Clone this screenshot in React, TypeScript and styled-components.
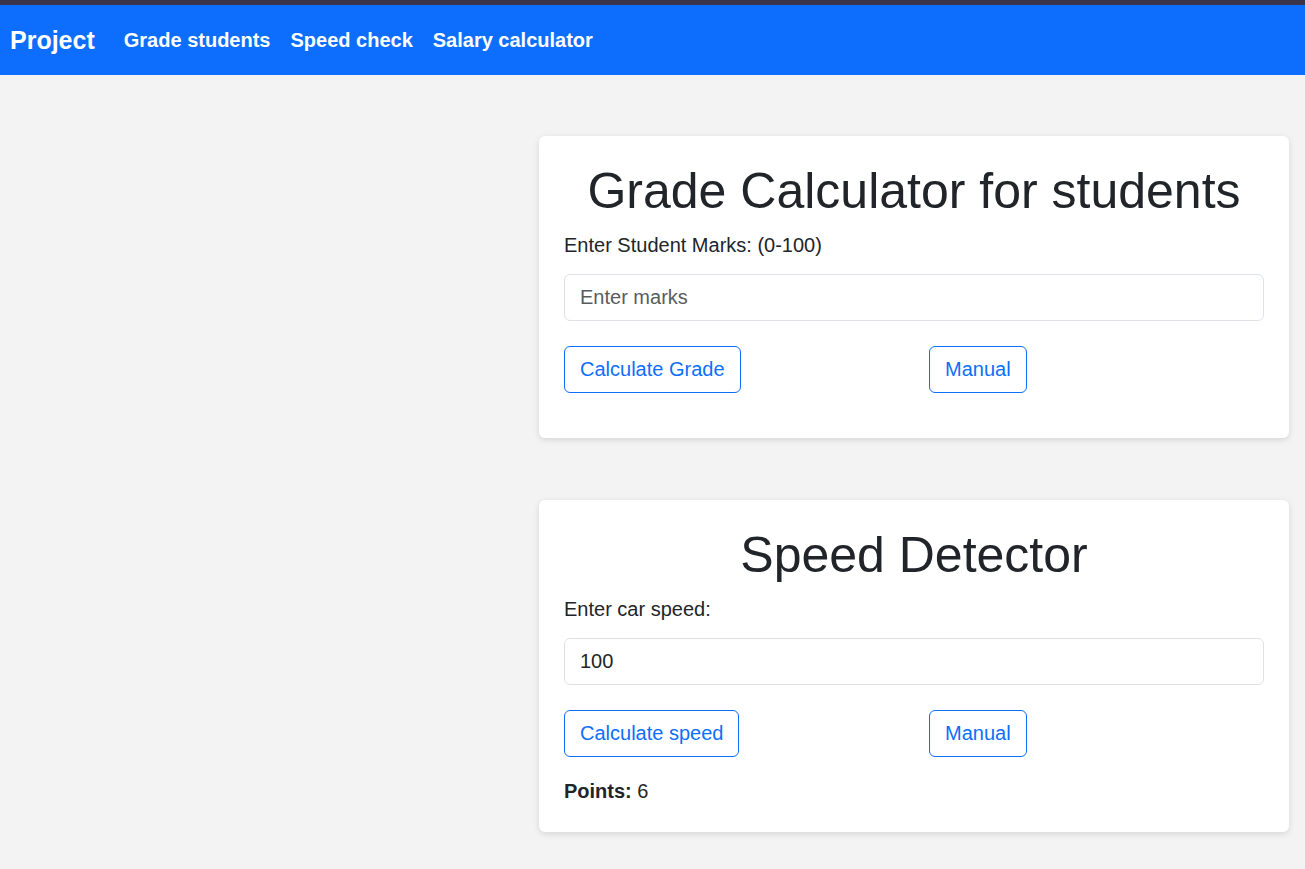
import React from "react";
import styled, { createGlobalStyle } from "styled-components";

const GlobalStyle = createGlobalStyle`
  html, body {
    margin: 0;
    padding: 0;
    background: #f3f3f3;
    font-family: "Liberation Sans", Arial, sans-serif;
    color: #212529;
  }
  * { box-sizing: border-box; }
`;

const TopStrip = styled.div`
  height: 5px;
  background: #3a3548;
`;

const NavBar = styled.nav`
  height: 70px;
  background: #0d6efd;
  display: flex;
  align-items: center;
  padding: 0 10px;
  gap: 20px;
`;

const Brand = styled.a`
  color: #fff;
  font-weight: 700;
  font-size: 25px;
  text-decoration: none;
  margin-right: 9px;
`;

const NavLink = styled.a`
  color: #fff;
  font-weight: 700;
  font-size: 20px;
  text-decoration: none;
`;

const Main = styled.main`
  display: flex;
  flex-direction: column;
  align-items: flex-end;
  padding: 61px 16px 37px 0;
  gap: 62px;
`;

const Card = styled.section`
  width: 750px;
  background: #fff;
  border-radius: 6px;
  box-shadow: 0 2px 6px rgba(0, 0, 0, 0.12);
  padding: 25px 25px 26px;
`;

const Title = styled.h1`
  margin: 0 0 9px;
  font-size: 50px;
  font-weight: 400;
  line-height: 1.2;
  text-align: center;
`;

const Label = styled.label`
  display: block;
  font-size: 20px;
  line-height: 1.5;
  margin-bottom: 14px;
`;

const Input = styled.input`
  display: block;
  width: 100%;
  height: 47px;
  padding: 8px 15px;
  font-family: inherit;
  font-size: 20px;
  color: #212529;
  border: 1px solid #dee2e6;
  border-radius: 6px;
  background: #fff;
  outline: none;
  &::placeholder { color: #595c5f; opacity: 1; }
`;

const ButtonRow = styled.div`
  display: grid;
  grid-template-columns: 1fr 1fr;
  column-gap: 30px;
  margin-top: 25px;
`;

const Cell = styled.div`
  display: flex;
`;

const OutlineButton = styled.button`
  height: 47px;
  padding: 0 15px;
  font-family: inherit;
  font-size: 20px;
  color: #0d6efd;
  background: #fff;
  border: 1px solid #0d6efd;
  border-radius: 6px;
  cursor: pointer;
`;

const Result = styled.p<{ $top: number }>`
  margin: ${(p) => p.$top}px 0 0;
  font-size: 20px;
  line-height: 1.5;
  min-height: ${(p) => (p.$top ? 0 : 19)}px;
`;

export default function App() {
  return (
    <>
      <GlobalStyle />
      <TopStrip />
      <NavBar>
        <Brand href="#">Project</Brand>
        <NavLink href="#">Grade students</NavLink>
        <NavLink href="#">Speed check</NavLink>
        <NavLink href="#">Salary calculator</NavLink>
      </NavBar>
      <Main>
        <Card>
          <Title>Grade Calculator for students</Title>
          <Label htmlFor="marks">Enter Student Marks: (0-100)</Label>
          <Input id="marks" placeholder="Enter marks" />
          <ButtonRow>
            <Cell>
              <OutlineButton>Calculate Grade</OutlineButton>
            </Cell>
            <Cell>
              <OutlineButton>Manual</OutlineButton>
            </Cell>
          </ButtonRow>
          <Result $top={0} />
        </Card>
        <Card>
          <Title>Speed Detector</Title>
          <Label htmlFor="speed">Enter car speed:</Label>
          <Input id="speed" defaultValue="100" />
          <ButtonRow>
            <Cell>
              <OutlineButton>Calculate speed</OutlineButton>
            </Cell>
            <Cell>
              <OutlineButton>Manual</OutlineButton>
            </Cell>
          </ButtonRow>
          <Result $top={19}>
            <strong>Points:</strong> 6
          </Result>
        </Card>
      </Main>
    </>
  );
}
